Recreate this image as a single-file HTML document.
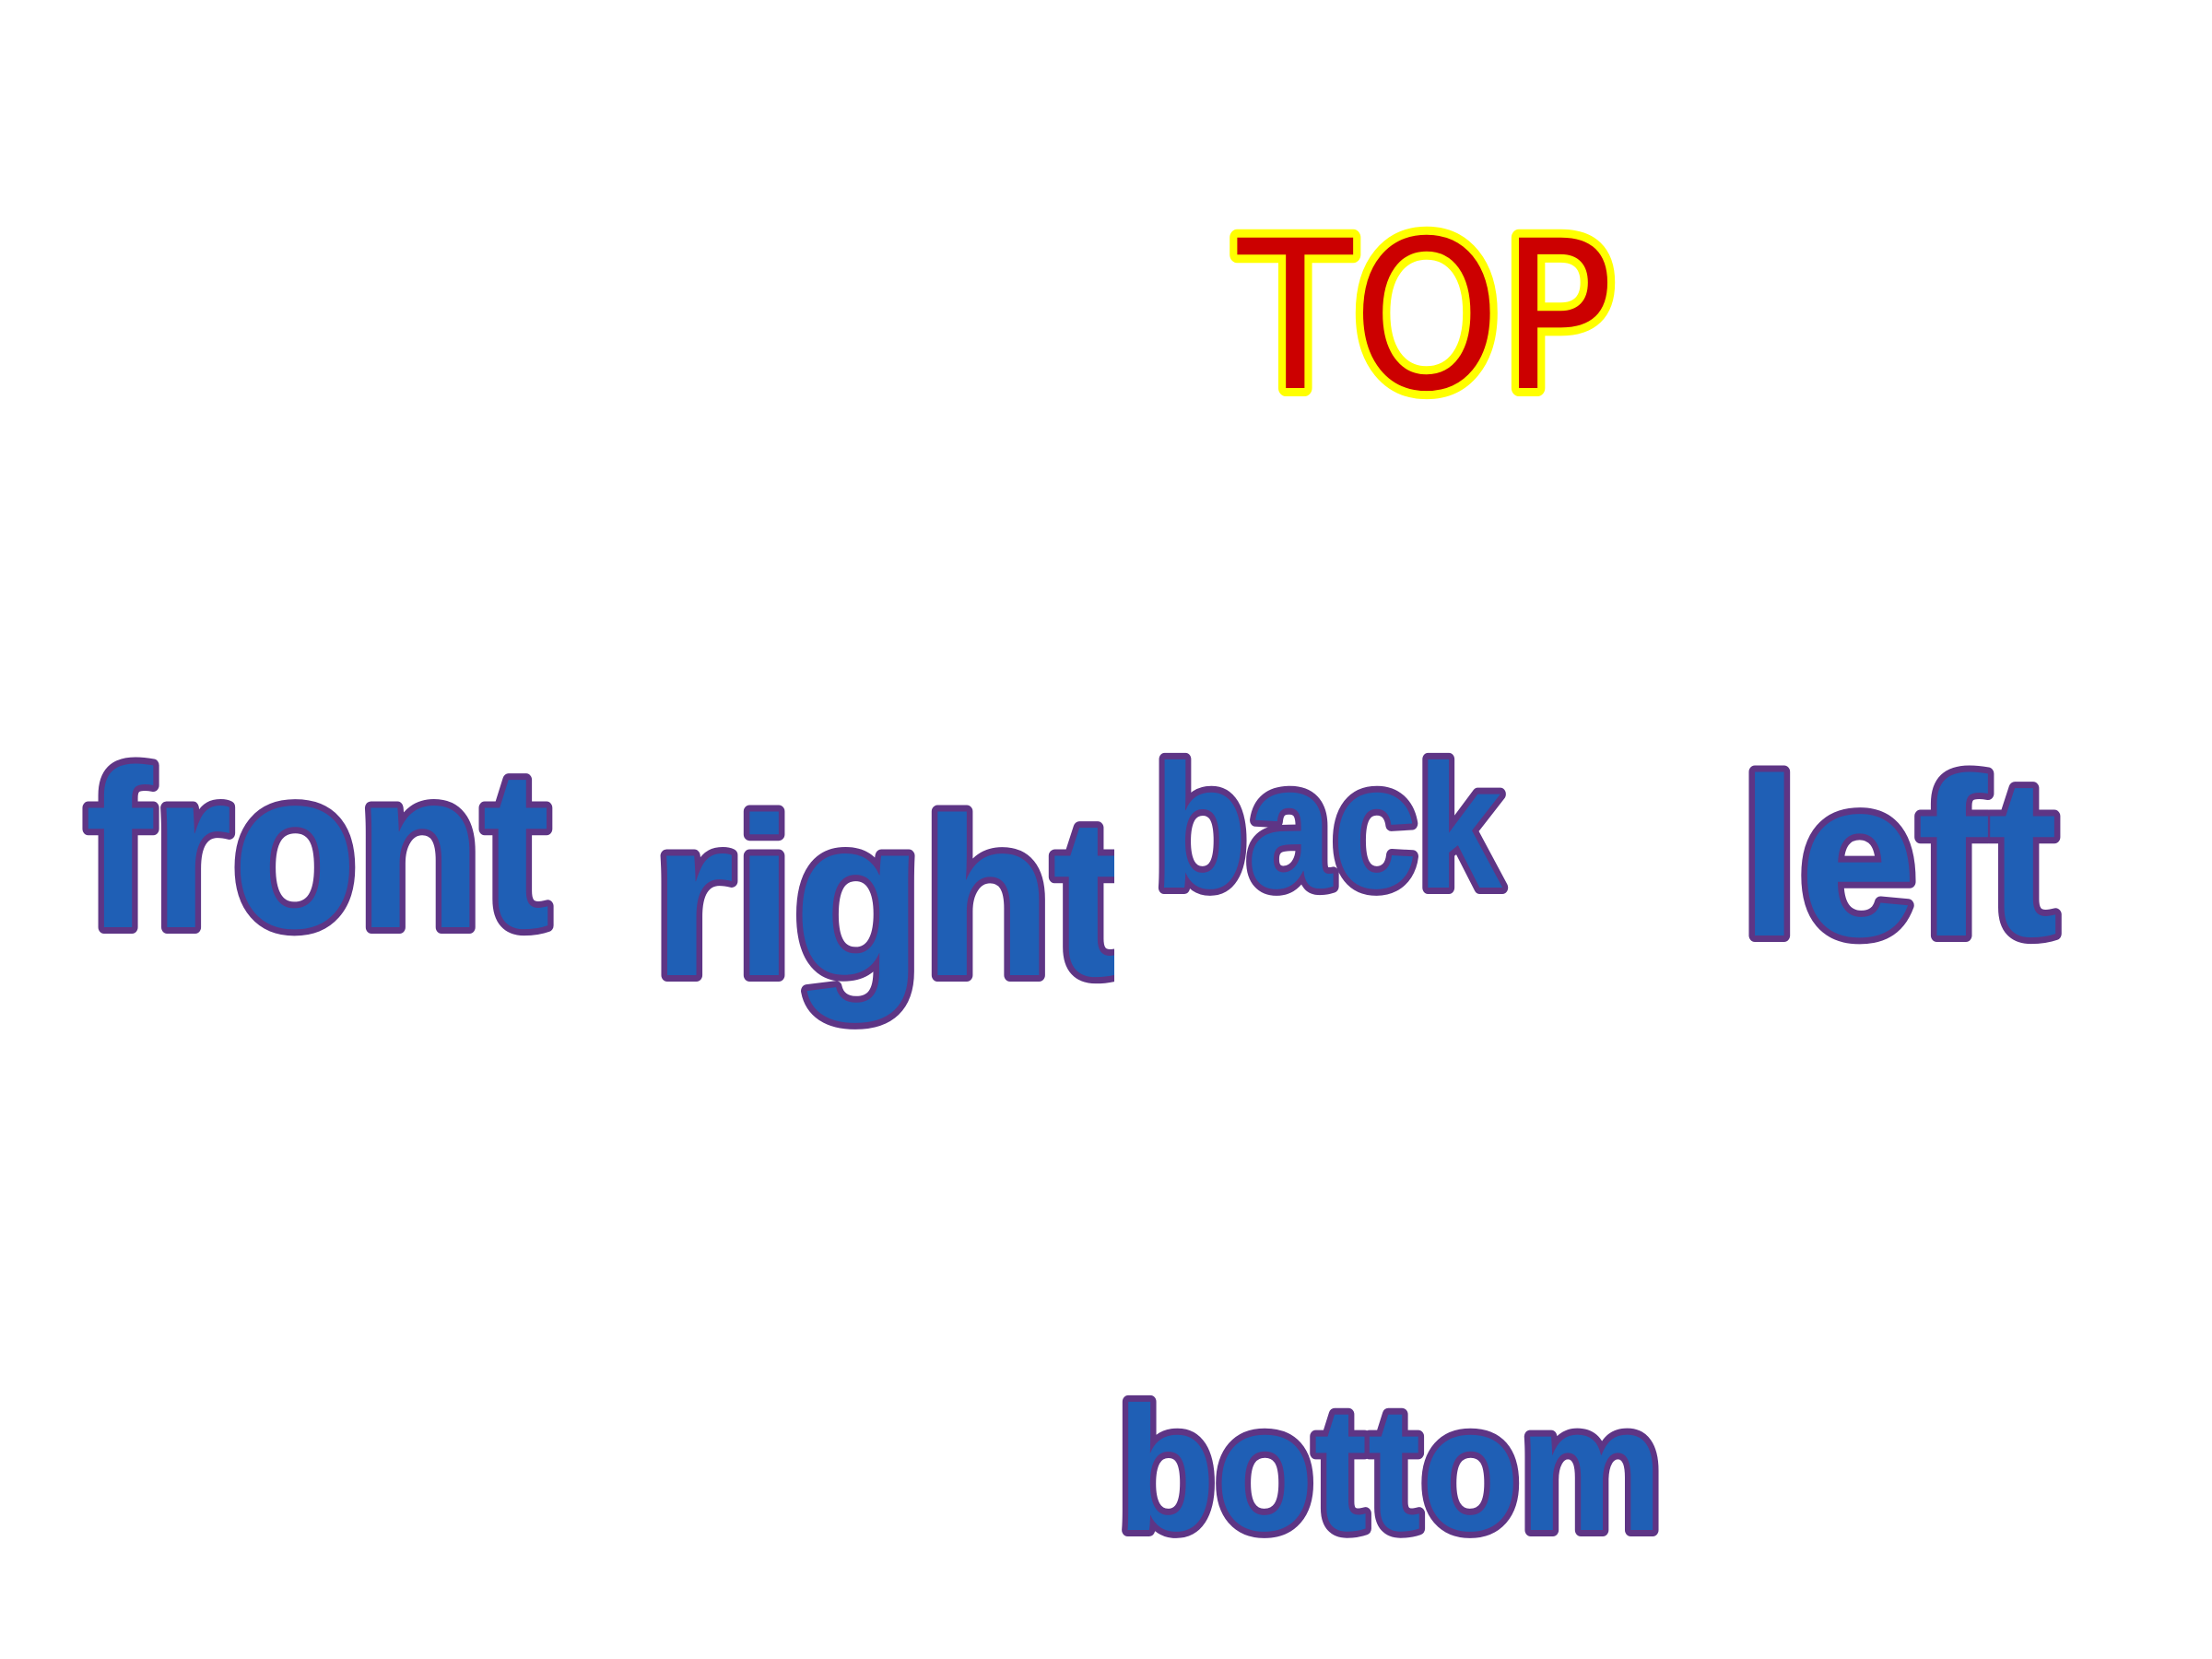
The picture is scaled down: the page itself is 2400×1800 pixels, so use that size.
<!DOCTYPE html>
<html><head><meta charset="utf-8"><style>
html,body{margin:0;padding:0;background:#fff;width:2400px;height:1800px;overflow:hidden}
svg{display:block}
text{font-family:"DejaVu Sans","Liberation Sans",sans-serif;paint-order:stroke fill;stroke-linejoin:round}
.b{font-family:"Liberation Sans",sans-serif;font-weight:bold;fill:#1f5fb5;stroke:#5e3585;stroke-width:14px}
</style></head><body>
<svg width="2400" height="1800" viewBox="0 0 2400 1800" xmlns="http://www.w3.org/2000/svg">
<defs><clipPath id="c"><rect x="0" y="0" width="1209" height="1800"/></clipPath></defs>
<text x="1343" y="421" font-size="224" fill="#cc0000" stroke="#ffff00" stroke-width="18" textLength="408" lengthAdjust="spacingAndGlyphs">TOP</text>
<text class="b" x="92" y="1006" font-size="245" textLength="505" lengthAdjust="spacingAndGlyphs">front</text>
<g clip-path="url(#c)"><text class="b" x="708" y="1058" font-size="245" textLength="510" lengthAdjust="spacingAndGlyphs">right</text></g>
<text class="b" x="1252" y="963" font-size="192" textLength="378" lengthAdjust="spacingAndGlyphs">back</text>
<text class="b" x="1888" y="1015" font-size="245" textLength="345" lengthAdjust="spacingAndGlyphs">left</text>
<text class="b" x="1212" y="1660" font-size="192" textLength="592" lengthAdjust="spacingAndGlyphs">bottom</text>
</svg>
</body></html>
